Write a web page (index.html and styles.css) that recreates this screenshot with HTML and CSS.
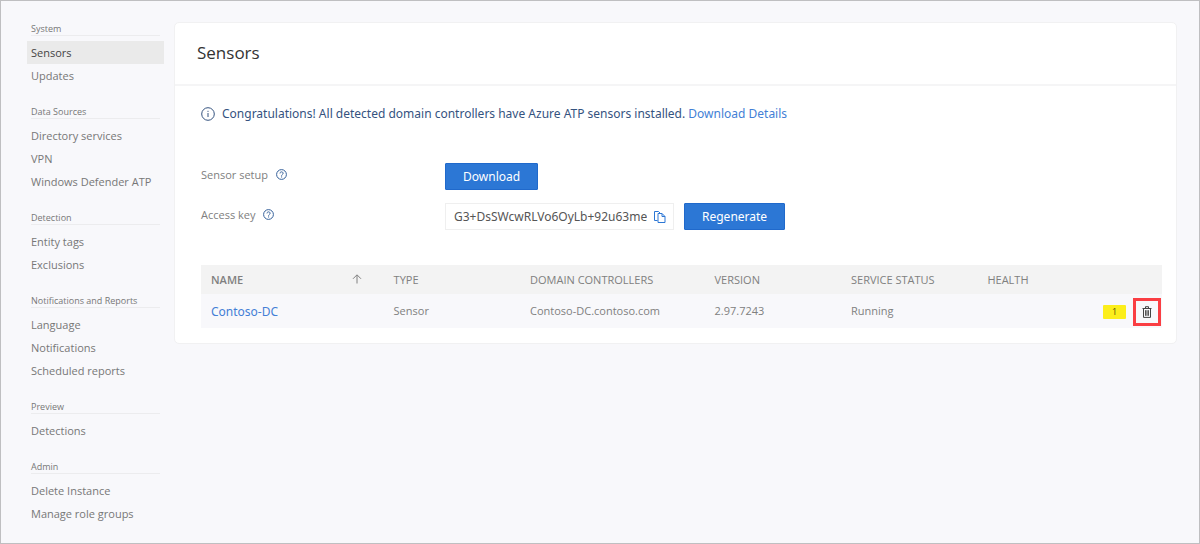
FILE: index.html
```html
<!DOCTYPE html>
<html lang="en">
<head>
<meta charset="utf-8">
<meta name="viewport" content="width=device-width, initial-scale=1">
<title>Sensors</title>
<link rel="stylesheet" href="styles.css">
</head>
<body>
<div class="page">
  <nav class="sidebar" aria-label="Configuration">
    <section class="nav-group">
      <h2 class="nav-title">System</h2>
      <a class="nav-link active" href="#sensors" aria-current="page">Sensors</a>
      <a class="nav-link" href="#updates">Updates</a>
    </section>
    <section class="nav-group">
      <h2 class="nav-title">Data Sources</h2>
      <a class="nav-link" href="#directory">Directory services</a>
      <a class="nav-link" href="#vpn">VPN</a>
      <a class="nav-link" href="#defender">Windows Defender ATP</a>
    </section>
    <section class="nav-group">
      <h2 class="nav-title">Detection</h2>
      <a class="nav-link" href="#tags">Entity tags</a>
      <a class="nav-link" href="#exclusions">Exclusions</a>
    </section>
    <section class="nav-group">
      <h2 class="nav-title">Notifications and Reports</h2>
      <a class="nav-link" href="#language">Language</a>
      <a class="nav-link" href="#notifications">Notifications</a>
      <a class="nav-link" href="#reports">Scheduled reports</a>
    </section>
    <section class="nav-group">
      <h2 class="nav-title">Preview</h2>
      <a class="nav-link" href="#detections">Detections</a>
    </section>
    <section class="nav-group">
      <h2 class="nav-title">Admin</h2>
      <a class="nav-link" href="#delete">Delete Instance</a>
      <a class="nav-link" href="#roles">Manage role groups</a>
    </section>
  </nav>

  <main class="panel">
    <header class="panel-header"><h1 class="panel-title">Sensors</h1></header>
    <div class="panel-body">
      <p class="notice">
        <svg class="notice-icon" viewBox="0 0 14 14" aria-hidden="true"><circle cx="7" cy="7" r="6.3"/><path d="M7 6v4M7 3.8v1.1"/></svg>
        <span>Congratulations! All detected domain controllers have Azure ATP sensors installed. <a class="link" href="#details">Download Details</a></span>
      </p>

      <div class="settings">
        <div class="setting">
          <div class="setting-label">
            <span>Sensor setup</span>
            <svg class="help-icon" viewBox="0 0 11 11" aria-hidden="true"><circle cx="5.5" cy="5.5" r="4.9"/><path d="M4 4.4c0-2.1 3.1-2 3.1-.1 0 1.2-1.5 1.2-1.5 2.4M5.6 7.4v1.1"/></svg>
          </div>
          <button class="button" type="button">Download</button>
        </div>
        <div class="setting">
          <div class="setting-label">
            <label for="access-key">Access key</label>
            <svg class="help-icon" viewBox="0 0 11 11" aria-hidden="true"><circle cx="5.5" cy="5.5" r="4.9"/><path d="M4 4.4c0-2.1 3.1-2 3.1-.1 0 1.2-1.5 1.2-1.5 2.4M5.6 7.4v1.1"/></svg>
          </div>
          <div class="key-field">
            <input class="key-input" id="access-key" type="text" value="G3+DsSWcwRLVo6OyLb+92u63me" readonly>
            <button class="icon-button" type="button" aria-label="Copy access key">
              <svg class="copy-icon" viewBox="0 0 12 12" aria-hidden="true"><path d="M3.5 9.5h-3v-9h4l2 2M4 2.5h4l3 3v6H4zM8 2.5v3h3"/></svg>
            </button>
          </div>
          <button class="button" type="button">Regenerate</button>
        </div>
      </div>

      <table class="sensors">
        <colgroup>
          <col class="col-name"><col class="col-type"><col class="col-dc"><col class="col-version"><col class="col-status"><col class="col-health">
        </colgroup>
        <thead>
          <tr>
            <th scope="col" class="sorted" aria-sort="ascending">
              <div class="sort-head"><span>NAME</span>
                <svg class="sort-icon" viewBox="0 0 10 10" aria-hidden="true"><path d="M5 9.5V1M1 4.8l4-4 4 4"/></svg></div>
            </th>
            <th scope="col">TYPE</th>
            <th scope="col">DOMAIN CONTROLLERS</th>
            <th scope="col">VERSION</th>
            <th scope="col">SERVICE STATUS</th>
            <th scope="col">HEALTH</th>
          </tr>
        </thead>
        <tbody>
          <tr>
            <td class="name-cell"><a class="link" href="#contoso-dc">Contoso-DC</a></td>
            <td>Sensor</td>
            <td>Contoso-DC.contoso.com</td>
            <td>2.97.7243</td>
            <td>Running</td>
            <td class="health-cell">
              <div class="health">
                <span class="badge">1</span>
                <button class="delete" type="button" aria-label="Delete sensor">
                  <svg class="trash-icon" viewBox="0 0 10 12" aria-hidden="true"><path d="M.5 2.5h9M3.5 2.3V.7h3v1.6M1.5 2.5v8.9h7V2.5M3.6 4.2v5.6M5 4.2v5.6M6.4 4.2v5.6"/></svg>
                </button>
              </div>
            </td>
          </tr>
        </tbody>
      </table>
    </div>
  </main>
</div>
</body>
</html>
```
FILE: styles.css
```css
* { box-sizing: border-box; }

body {
  margin: 0;
  background: #f8f8fb;
  color: #777;
  font-family: "Open Sans", "Noto Sans", sans-serif;
  font-size: 11px;
}

.page {
  display: flex;
  align-items: flex-start;
  gap: 10px;
  min-height: 100vh;
  padding: 21px 22px 0 26px;
  border: 1px solid #bfbfc1;
}

.sidebar { flex: 0 0 137px; }
.nav-group { margin-bottom: 18px; }
.nav-title {
  height: 14px;
  margin: 0 4px 5px;
  border-bottom: 1px solid #ececee;
  font-size: 9px;
  font-weight: 400;
  line-height: 13px;
  white-space: nowrap;
}
.nav-link {
  display: block;
  padding: 0 4px;
  color: #777;
  line-height: 23px;
  text-decoration: none;
  white-space: nowrap;
}
.nav-link.active { background: #eaeaea; color: #444; }

.panel {
  flex: 1;
  min-width: 0;
  background: #fff;
  border: 1px solid #f1f1f2;
  border-radius: 5px;
}
.panel-header { padding: 16px 22px 17px; border-bottom: 2px solid #f5f5f6; }
.panel-title {
  margin: 0;
  color: #333;
  font-size: 17px;
  font-weight: 400;
  line-height: 28px;
}
.panel-body { padding: 18px 14px 15px 26px; }

.notice {
  display: flex;
  align-items: center;
  gap: 7px;
  margin: 0 0 39px;
  color: #35537f;
  font-family: "Noto Sans", sans-serif;
  font-size: 12px;
  line-height: 20px;
}
.link { color: #437fd6; text-decoration: none; }

svg { flex: none; fill: none; stroke: currentColor; }
.notice-icon { width: 14px; height: 14px; }
.help-icon { width: 11px; height: 11px; color: #35609a; }
.copy-icon { display: block; width: 12px; height: 12px; }
.sort-icon { width: 10px; height: 10px; }
.trash-icon { display: block; width: 10px; height: 12px; color: #444; }

.settings { display: grid; gap: 13px; margin-bottom: 35px; }
.setting { display: flex; align-items: center; }
.setting-label {
  display: flex;
  align-items: center;
  gap: 8px;
  flex: 0 0 244px;
  padding-bottom: 5px;
  color: #808080;
}
.button {
  height: 27px;
  padding: 0 17px;
  border: 1px solid #2069cb;
  border-radius: 1px;
  background: #2c77d5;
  color: #fff;
  font-family: "Noto Sans", sans-serif;
  font-size: 12px;
}
.key-field {
  display: flex;
  align-items: center;
  flex: 0 0 229px;
  height: 27px;
  margin-right: 10px;
  padding: 0 7px 0 8px;
  border: 1px solid #efefef;
}
.key-input {
  flex: 1;
  min-width: 0;
  margin-right: 7px;
  padding: 0;
  border: 0;
  background: none;
  color: #555;
  font-family: "Noto Sans", sans-serif;
  font-size: 12px;
  outline: 0;
}
.icon-button { padding: 0; border: 0; background: none; color: #2c77d5; }

.sensors {
  width: 100%;
  border-collapse: collapse;
  table-layout: fixed;
  color: #808080;
  text-align: left;
}
.col-name { width: 19%; }
.col-type { width: 14.2%; }
.col-dc { width: 19.2%; }
.col-version { width: 14.2%; }
.col-status { width: 14.2%; }
.sensors th {
  height: 29px;
  padding: 0 10px 1px;
  background: #f3f3f3;
  font-weight: 400;
  white-space: nowrap;
}
.sensors .sorted { padding-right: 22px; font-weight: 600; }
.sort-head { display: flex; align-items: center; justify-content: space-between; }
.sensors td { height: 34px; padding: 0 10px 1px; background: #f8f8fb; }
.sensors .name-cell { padding-bottom: 0; font-family: "Noto Sans", sans-serif; font-size: 12px; }
.sensors .health-cell { padding: 1px 1px 0; }
.health { display: flex; align-items: center; justify-content: flex-end; gap: 7px; }
.badge {
  width: 23px;
  height: 14px;
  border-radius: 1px;
  background: #fcee1b;
  color: #555500;
  font-size: 9px;
  line-height: 14px;
  text-align: center;
}
.delete {
  display: grid;
  place-items: center;
  width: 28px;
  height: 28px;
  padding: 0;
  border: 3px solid #fa3e43;
  background: none;
}
```
